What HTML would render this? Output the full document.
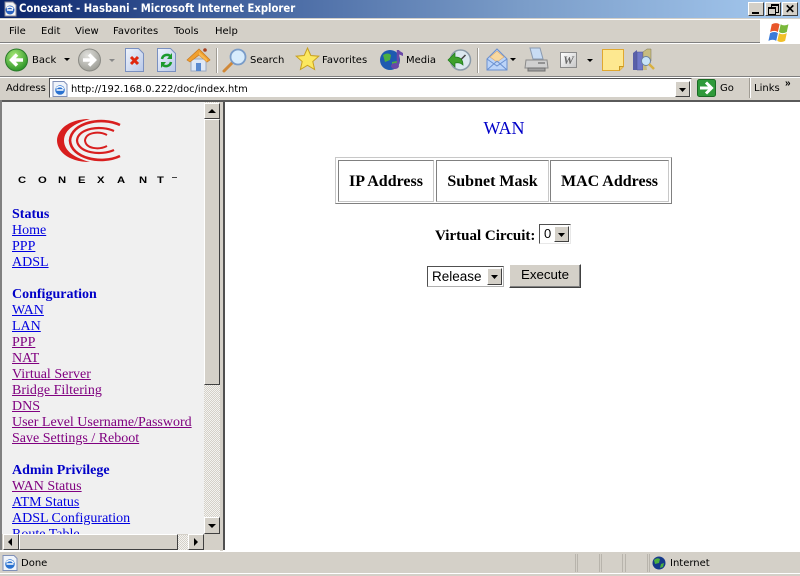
<!DOCTYPE html>
<html><head><meta charset="utf-8"><title>Conexant - Hasbani - Microsoft Internet Explorer</title>
<style>
html,body{margin:0;padding:0;background:#d4d0c8;}
body{width:800px;height:576px;position:relative;overflow:hidden;font-family:"DejaVu Sans","Liberation Sans",sans-serif;font-size:10px;color:#000;}
.a{position:absolute;}
.t{position:absolute;white-space:nowrap;line-height:14px;}
.s{position:absolute;white-space:nowrap;font-family:"Liberation Serif",serif;font-size:14px;line-height:16px;}
.l{color:#0000e0;text-decoration:underline;}
.v{color:#800080;text-decoration:underline;}
.h{color:#0000c8;font-weight:bold;}
.btn{position:absolute;background:#d4d0c8;border-style:solid;border-width:1px;border-color:#fff #404040 #404040 #fff;box-sizing:border-box;}
svg{position:absolute;overflow:visible;}
.th{position:absolute;border:1px solid;border-color:#808080 #c8c8c8 #c8c8c8 #808080;box-sizing:border-box;height:42px;top:160px;text-align:center;font:bold 16px/41px "Liberation Serif",serif;white-space:nowrap;}
.hatch{background-color:#e8e6e0;background-image:repeating-conic-gradient(#d4d0c8 0 25%,#f4f3f0 0 50%);background-size:2px 2px;}
.lg{position:absolute;top:71px;font:bold 9px/14px "Liberation Sans",sans-serif;transform:scaleX(1.25);transform-origin:left center;}
.sp{position:absolute;top:554px;width:1px;height:18px;background:#b8b4ac;}
</style></head><body>
<!-- title bar -->
<div class="a" style="left:0;top:0;width:800px;height:18px;background:linear-gradient(90deg,#0a246a 0,#3a5a98 25%,#7a9cc8 65%,#a6caf0 100%);"></div>
<svg style="left:2px;top:1px" width="16" height="16" viewBox="0 0 16 16"><path d="M3 1h8l3 3v11H3z" fill="#f4f4f4" stroke="#8a8a9a"/><circle cx="8" cy="9" r="4.500" fill="#2a62c0"/><path d="M5 9h6M5 7.500c1-2 5-2 6 .5" stroke="#fff" stroke-width="1.500" fill="none"/></svg>
<div class="t" style="left:19px;top:2px;color:#fff;font:bold 11.2px/14px 'DejaVu Sans Condensed','DejaVu Sans',sans-serif;">Conexant - Hasbani - Microsoft Internet Explorer</div>
<div class="btn" style="left:748px;top:2px;width:16px;height:14px"><div class="a" style="left:3px;top:9px;width:7px;height:2px;background:#000"></div></div>
<div class="btn" style="left:765px;top:2px;width:16px;height:14px"><div class="a" style="left:5px;top:1px;width:6px;height:6px;border:1px solid #000;border-top-width:2px"></div><div class="a" style="left:2px;top:4px;width:6px;height:5px;border:1px solid #000;border-top-width:2px;background:#d4d0c8"></div></div>
<div class="btn" style="left:782px;top:2px;width:16px;height:14px;font:bold 12px/12px 'Liberation Sans',sans-serif;text-align:center">✕</div>
<!-- separators -->
<div class="a" style="left:0;top:18px;width:800px;height:1px;background:#d4d0c8"></div>
<div class="a" style="left:0;top:19px;width:800px;height:1px;background:#fff"></div>
<div class="a" style="left:0;top:43px;width:800px;height:1px;background:#fff"></div>
<div class="a" style="left:0;top:42px;width:760px;height:1px;background:#808080"></div>
<div class="a" style="left:0;top:76px;width:800px;height:1px;background:#808080"></div>
<div class="a" style="left:0;top:77px;width:800px;height:1px;background:#fff"></div>
<!-- menu -->
<div class="t" style="left:9px;top:25px">File</div>
<div class="t" style="left:41px;top:25px">Edit</div>
<div class="t" style="left:75px;top:25px">View</div>
<div class="t" style="left:113px;top:25px">Favorites</div>
<div class="t" style="left:174px;top:25px">Tools</div>
<div class="t" style="left:215px;top:25px">Help</div>
<div class="a" style="left:760px;top:20px;width:40px;height:23px;background:#fff"></div>
<svg style="left:768px;top:22px" width="22" height="20" viewBox="0 0 19 18"><path d="M3 2q4-2 7 0l-1.500 7q-3-2-7 0z" fill="#e8562a"/><path d="M11 2q3 2 7 0l-1.500 7q-4 2-7 0z" fill="#7ab83a"/><path d="M1.500 10q4-2 7 0l-1.500 7q-3-2-7 0z" fill="#3a7ad8"/><path d="M9.500 10q3 2 7 0l-1.500 7q-4 2-7 0z" fill="#f2c028"/></svg>
<!-- toolbar -->
<svg style="left:5px;top:48px" width="24" height="24" viewBox="0 0 24 24"><defs><radialGradient id="g" cx=".4" cy=".3" r=".8"><stop offset="0" stop-color="#a8e878"/><stop offset="1" stop-color="#1c8a1c"/></radialGradient><radialGradient id="y" cx=".4" cy=".3" r=".8"><stop offset="0" stop-color="#e0e0dc"/><stop offset="1" stop-color="#96968e"/></radialGradient></defs><circle cx="11.500" cy="12" r="11" fill="url(#g)" stroke="#2a7a2a"/><path d="M18 12H7M12 6.500L6.500 12l5.500 5.500" stroke="#fff" stroke-width="3.500" fill="none"/></svg>
<div class="t" style="left:32px;top:54px">Back</div>
<svg style="left:64px;top:58px" width="6" height="4"><path d="M0 0h6L3 3z" fill="#000"/></svg>
<svg style="left:78px;top:48px" width="24" height="24" viewBox="0 0 24 24"><circle cx="11.500" cy="12" r="11" fill="url(#y)" stroke="#8a8a84"/><path d="M5 12h11M11 6.500l5.500 5.500-5.500 5.500" stroke="#fff" stroke-width="3.500" fill="none"/></svg>
<svg style="left:109px;top:59px" width="6" height="4"><path d="M0 0h6L3 3z" fill="#888"/></svg>
<svg style="left:125px;top:48px" width="20" height="24" viewBox="0 0 20 24"><defs><linearGradient id="p" x1="0" y1="0" x2="1" y2="1"><stop offset="0" stop-color="#f0f4fc"/><stop offset="1" stop-color="#b8c8e8"/></linearGradient></defs><path d="M.5.500h13l5 5v18H.5z" fill="url(#p)" stroke="#7a90c0"/><path d="M6 9l7 7M13 9l-7 7" stroke="#e02810" stroke-width="3"/></svg>
<svg style="left:157px;top:48px" width="20" height="24" viewBox="0 0 20 24"><path d="M.5.500h13l5 5v18H.5z" fill="url(#p)" stroke="#7a90c0"/><path d="M5 11a5 5 0 0 1 9-2M14 14a5 5 0 0 1-9 2" stroke="#1c9a2c" stroke-width="2.500" fill="none"/><path d="M15 5v6h-5zM4 20v-6h5z" fill="#1c9a2c"/></svg>
<svg style="left:186px;top:47px" width="25" height="25" viewBox="0 0 25 25"><path d="M5 24V12h15v12z" fill="#dfe8f6" stroke="#9aa8c0"/><path d="M10 24v-8h5v8z" fill="#5a8ad0"/><path d="M1 13L13 2l11 11-3 2-8-7-9 7z" fill="#f0a030" stroke="#c87820" stroke-width=".7"/><path d="M13 8l8 7v-3l-8-7z" fill="#f8b850"/><circle cx="19" cy="3" r="1.800" fill="#a84020"/></svg>
<div class="a" style="left:216px;top:48px;width:1px;height:25px;background:#a09c94"></div><div class="a" style="left:217px;top:48px;width:1px;height:25px;background:#fff"></div>
<svg style="left:222px;top:47px" width="26" height="26" viewBox="0 0 26 26"><path d="M2 24l8-8" stroke="#d08838" stroke-width="3" stroke-linecap="round"/><circle cx="16" cy="10" r="7.500" fill="#d8ecfc" stroke="#7a9cc8" stroke-width="1.800"/></svg>
<div class="t" style="left:250px;top:54px">Search</div>
<svg style="left:295px;top:47px" width="25" height="25" viewBox="0 0 25 25"><path d="M12.500 1l3.300 7.500 8 .7-6 5.300 1.800 8-7.100-4.200-7.100 4.200 1.800-8-6-5.300 8-.7z" fill="#fce860" stroke="#c8a020"/></svg>
<div class="t" style="left:322px;top:54px">Favorites</div>
<svg style="left:379px;top:48px" width="25" height="24" viewBox="0 0 25 24"><circle cx="11" cy="12" r="10" fill="#1e5ab0"/><path d="M4 7q5-3 8 0l-1 5-5 2zM13 14l5-1-1 6-4 1z" fill="#4cb040"/><path d="M19 2v14" stroke="#6a48a8" stroke-width="2.500"/><path d="M19 2l5 3v3l-5-2z" fill="#6a48a8"/><ellipse cx="16" cy="18" rx="4" ry="3" fill="#6a48a8"/></svg>
<div class="t" style="left:406px;top:54px">Media</div>
<svg style="left:447px;top:48px" width="25" height="24" viewBox="0 0 25 24"><circle cx="13.500" cy="12" r="10" fill="#dce8f0" stroke="#8a9aa8" stroke-width="1.500"/><path d="M13.500 12l5-5" stroke="#444" stroke-width="1.500"/><path d="M1 12l7-7v4q8 0 8 8-3-3-8-2v4z" fill="#3fa02c" stroke="#1c7a1c" stroke-width=".7"/></svg>
<div class="a" style="left:477px;top:48px;width:1px;height:25px;background:#a09c94"></div><div class="a" style="left:478px;top:48px;width:1px;height:25px;background:#fff"></div>
<svg style="left:486px;top:48px" width="23" height="24" viewBox="0 0 23 24"><path d="M1 11L11 1l10 10v11H1z" fill="#bcd4f8" stroke="#6a90d0"/><path d="M4 9l7-6 7 6-7 5z" fill="#f8d8a0" stroke="#d8a870" stroke-width=".6"/><path d="M1 22l10-9 10 9M1 11l10 7 10-7" fill="none" stroke="#6a90d0"/></svg>
<svg style="left:510px;top:58px" width="6" height="4"><path d="M0 0h6L3 3z" fill="#000"/></svg>
<svg style="left:524px;top:47px" width="25" height="26" viewBox="0 0 25 26"><path d="M6 1h10l3 11H9z" fill="#c8dcf4" stroke="#8a9ab0"/><path d="M2 13h21l1 8H1z" fill="#d0d0d0" stroke="#8a8a8a"/><path d="M4 21h17v3H4z" fill="#a0a0a0" stroke="#707070"/><path d="M14 16h7" stroke="#555"/></svg>
<div class="a" style="left:560px;top:52px;width:17px;height:16px;background:linear-gradient(135deg,#fff,#c8c8c8);border:1px solid #8a8a8a;box-sizing:border-box;color:#666;font:italic bold 12px/14px 'Liberation Serif',serif;text-align:center">W</div>
<svg style="left:587px;top:59px" width="6" height="4"><path d="M0 0h6L3 3z" fill="#000"/></svg>
<svg style="left:602px;top:49px" width="23" height="23" viewBox="0 0 23 23"><path d="M.5.500h21v17l-4 4H.5z" fill="#fde890" stroke="#e0a830"/><path d="M17.500 21.500v-4h4" fill="#f0c860" stroke="#c89820"/></svg>
<svg style="left:632px;top:48px" width="23" height="24" viewBox="0 0 23 24"><path d="M1 5l4-3v20H1z" fill="#5a60a8"/><path d="M5 4h6v18H5z" fill="#7078c8" stroke="#484e90" stroke-width=".5"/><path d="M11 4l4-3h4v12h-8z" fill="#c8bc80" stroke="#7a7450" stroke-width=".5"/><path d="M11 15h3l1 7h-4z" fill="#c8bc80"/><circle cx="14" cy="13" r="4.500" fill="#c8e4f8" stroke="#6a80a0"/><path d="M17 16l5 5" stroke="#d8b040" stroke-width="2.500"/></svg>
<!-- address bar -->
<div class="t" style="left:6px;top:82px">Address</div>
<div class="a" style="left:49px;top:78px;width:643px;height:20px;background:#fff;border:1px solid;border-color:#505050 #d4d0c8 #d4d0c8 #505050;box-sizing:border-box"></div>
<svg style="left:52px;top:81px" width="16" height="16" viewBox="0 0 16 16"><path d="M1 .5h11l3 3v12H1z" fill="#f0f4fa" stroke="#8090b8"/><circle cx="8" cy="9" r="4.800" fill="#2a72d0"/><path d="M4.500 9h7M4.500 7.500c1-2.500 6-2.500 7 .5" stroke="#fff" stroke-width="1.400" fill="none"/></svg>
<div class="t" style="left:71px;top:83px;font-size:9.900px">http://192.168.0.222/doc/index.htm</div>
<div class="btn" style="left:675px;top:81px;width:15px;height:16px"><svg style="left:3px;top:6px" width="7" height="4"><path d="M0 0h7L3.500 4z" fill="#000"/></svg></div>
<svg style="left:697px;top:79px" width="20" height="18" viewBox="0 0 20 18"><rect x=".5" y=".5" width="18" height="17" rx="2" fill="#2f9a3a" stroke="#1a6a24"/><path d="M3 9h11M9 3.500L14.500 9 9 14.500" stroke="#fff" stroke-width="3" fill="none"/></svg>
<div class="t" style="left:720px;top:82px">Go</div>
<div class="a" style="left:749px;top:78px;width:1px;height:20px;background:#a09c94"></div><div class="a" style="left:750px;top:78px;width:1px;height:20px;background:#fff"></div>
<div class="t" style="left:754px;top:82px">Links</div>
<div class="t" style="left:785px;top:78px;font:bold 10px/12px 'Liberation Sans',sans-serif">»</div>
<!-- content frames -->
<div class="a" style="left:0;top:100px;width:800px;height:451px;background:#fff"></div>
<div class="a" style="left:0;top:100px;width:800px;height:2px;background:#5a5a5a"></div>
<div class="a" style="left:0;top:100px;width:2px;height:450px;background:#808080"></div>
<div class="a" style="left:2px;top:102px;width:202px;height:432px;background:#f0f0f0;overflow:hidden">
 <svg style="left:55px;top:17px" width="66" height="43" viewBox="0 0 66 43"><path d="M33 0C10 0 0 12 0 21.500 0 31 10 43 33 43 18 39 7 32 7 21.500 7 11 18 4 33 0z" fill="#d81e1e"/><g fill="none" stroke="#d81e1e"><path d="M63 6C44-3 14 4 13 21.500 14 39 44 46 63 37" stroke-width="2.600"/><path d="M57 12C44 6 21 9 20 21.500 21 34 44 37 57 31" stroke-width="2.200"/><path d="M50 16C42 12 29 13 28 21.500 29 30 42 31 50 27" stroke-width="2"/></g></svg>
 <span class="lg" style="left:16px">C</span><span class="lg" style="left:36px">O</span><span class="lg" style="left:56px">N</span><span class="lg" style="left:76px">E</span><span class="lg" style="left:95px">X</span><span class="lg" style="left:115px">A</span><span class="lg" style="left:137px">N</span><span class="lg" style="left:155px">T</span>
 <div class="a" style="left:170px;top:75px;width:5px;height:1px;background:#444"></div>
 <div class="s h" style="left:10px;top:105px">Status</div>
 <div class="s l" style="left:10px;top:121px">Home</div>
 <div class="s l" style="left:10px;top:137px">PPP</div>
 <div class="s l" style="left:10px;top:153px">ADSL</div>
 <div class="s h" style="left:10px;top:185px">Configuration</div>
 <div class="s l" style="left:10px;top:201px">WAN</div>
 <div class="s l" style="left:10px;top:217px">LAN</div>
 <div class="s v" style="left:10px;top:233px">PPP</div>
 <div class="s v" style="left:10px;top:249px">NAT</div>
 <div class="s v" style="left:10px;top:265px">Virtual Server</div>
 <div class="s v" style="left:10px;top:281px">Bridge Filtering</div>
 <div class="s v" style="left:10px;top:297px">DNS</div>
 <div class="s v" style="left:10px;top:313px">User Level Username/Password</div>
 <div class="s v" style="left:10px;top:329px">Save Settings / Reboot</div>
 <div class="s h" style="left:10px;top:361px">Admin Privilege</div>
 <div class="s v" style="left:10px;top:377px">WAN Status</div>
 <div class="s l" style="left:10px;top:393px">ATM Status</div>
 <div class="s l" style="left:10px;top:409px">ADSL Configuration</div>
 <div class="s l" style="left:10px;top:425px">Route Table</div>
</div>
<!-- v scrollbar -->
<div class="a hatch" style="left:204px;top:102px;width:16px;height:432px"></div>
<div class="btn" style="left:204px;top:103px;width:16px;height:16px"><svg style="left:3px;top:5px" width="8" height="4"><path d="M0 4h8L4 0z" fill="#000"/></svg></div>
<div class="btn" style="left:204px;top:119px;width:16px;height:266px"></div>
<div class="btn" style="left:204px;top:517px;width:16px;height:17px"><svg style="left:3px;top:6px" width="8" height="4"><path d="M0 0h8L4 4z" fill="#000"/></svg></div>
<!-- h scrollbar -->
<div class="a" style="left:2px;top:534px;width:218px;height:16px;background:#d4d0c8"></div>
<div class="a hatch" style="left:178px;top:535px;width:10px;height:15px"></div>
<div class="btn" style="left:3px;top:534px;width:16px;height:16px"><svg style="left:4px;top:3px" width="4" height="8"><path d="M4 0v8L0 4z" fill="#000"/></svg></div>
<div class="btn" style="left:19px;top:534px;width:159px;height:16px"></div>
<div class="btn" style="left:188px;top:534px;width:16px;height:16px"><svg style="left:5px;top:3px" width="4" height="8"><path d="M0 0v8l4-4z" fill="#000"/></svg></div>
<div class="a" style="left:220px;top:102px;width:3px;height:449px;background:#d4d0c8"></div>
<div class="a" style="left:223px;top:102px;width:2px;height:448px;background:#505050"></div>
<!-- main -->
<div class="s" style="left:225px;top:119px;width:558px;text-align:center;font-size:18px;line-height:18px;color:#0000c8">WAN</div>
<div class="a" style="left:335px;top:157px;width:337px;height:47px;border:1px solid;border-color:#c8c8c8 #808080 #808080 #c8c8c8;box-sizing:border-box"></div>
<div class="th" style="left:338px;width:96px">IP Address</div>
<div class="th" style="left:436px;width:113px">Subnet Mask</div>
<div class="th" style="left:550px;width:119px">MAC Address</div>
<div class="t" style="left:435px;top:228px;font:bold 15px/16px 'Liberation Serif',serif">Virtual Circuit:</div>
<div class="a" style="left:539px;top:224px;width:32px;height:20px;background:#fff;border:1px solid;border-color:#505050 #e8e8e8 #e8e8e8 #505050;box-sizing:border-box;font:13px/18px 'Liberation Sans',sans-serif;padding-left:4px">0</div>
<div class="btn" style="left:554px;top:226px;width:15px;height:16px"><svg style="left:3px;top:6px" width="7" height="4"><path d="M0 0h7L3.500 4z" fill="#000"/></svg></div>
<div class="a" style="left:427px;top:266px;width:77px;height:21px;background:#fff;border:1px solid;border-color:#505050 #b0b0b0 #b0b0b0 #505050;box-sizing:border-box;font:13.500px/20px 'Liberation Sans',sans-serif;padding-left:4px">Release</div>
<div class="btn" style="left:487px;top:268px;width:15px;height:17px"><svg style="left:3px;top:6px" width="7" height="4"><path d="M0 0h7L3.500 4z" fill="#000"/></svg></div>
<div class="btn" style="left:509px;top:264px;width:72px;height:24px;font:13.300px/20px 'Liberation Sans',sans-serif;text-align:center;box-shadow:inset -1px -1px #808080">Execute</div>
<!-- status bar -->
<div class="a" style="left:0;top:551px;width:800px;height:1px;background:#fff"></div>
<svg style="left:2px;top:555px" width="16" height="16" viewBox="0 0 16 16"><path d="M1 .5h11l3 3v12H1z" fill="#f0f4fa" stroke="#8090b8"/><circle cx="8" cy="9" r="4.800" fill="#2a72d0"/><path d="M4.500 9h7M4.500 7.500c1-2.500 6-2.500 7 .5" stroke="#fff" stroke-width="1.400" fill="none"/></svg>
<div class="t" style="left:21px;top:557px">Done</div>
<div class="a" style="left:0;top:573px;width:800px;height:1px;background:#fff"></div>
<div class="sp" style="left:575px"></div><div class="sp" style="left:577px"></div>
<div class="sp" style="left:599px"></div><div class="sp" style="left:601px"></div>
<div class="sp" style="left:622px"></div><div class="sp" style="left:625px"></div>
<div class="sp" style="left:647px"></div><div class="sp" style="left:649px"></div>
<svg style="left:652px;top:556px" width="14" height="14" viewBox="0 0 14 14"><circle cx="7" cy="7" r="6.500" fill="#14388a"/><path d="M2 4q3-3 6-1l-1 4-4 1zM9 8l3-1-1 4-3 1z" fill="#4cb040"/></svg>
<div class="t" style="left:670px;top:557px">Internet</div>
</body></html>
